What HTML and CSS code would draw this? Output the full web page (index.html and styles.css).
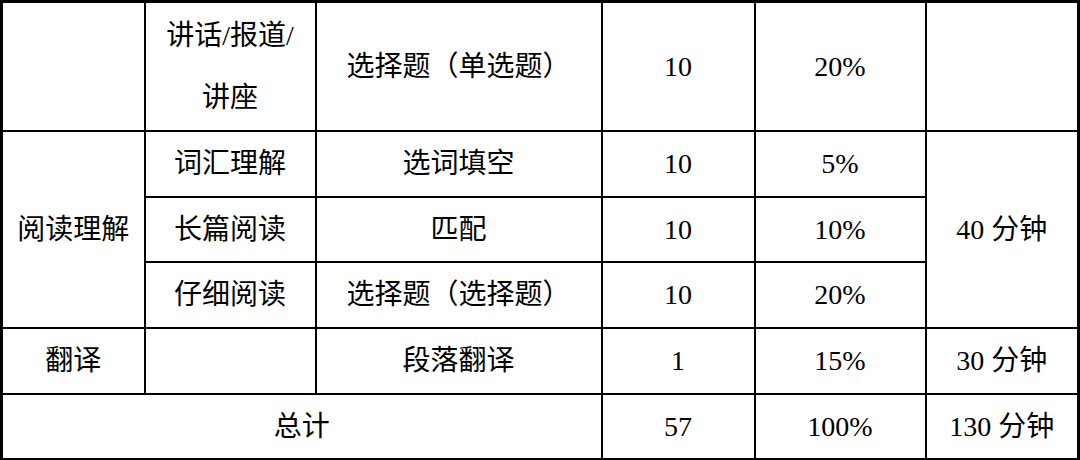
FILE: index.html
```html
<!DOCTYPE html>
<html lang="zh-CN">
<head>
<meta charset="utf-8">
<title>考试结构</title>
<link rel="stylesheet" href="styles.css">
</head>
<body>
<table class="exam">
  <colgroup>
    <col class="c1"><col class="c2"><col class="c3"><col class="c4"><col class="c5"><col class="c6">
  </colgroup>
  <tbody>
    <tr class="r-tall">
      <td></td>
      <td class="two-line">讲话/报道/<br>讲座</td>
      <td>选择题（单选题）</td>
      <td>10</td>
      <td>20%</td>
      <td></td>
    </tr>
    <tr class="r-a">
      <td rowspan="3">阅读理解</td>
      <td>词汇理解</td>
      <td>选词填空</td>
      <td>10</td>
      <td>5%</td>
      <td rowspan="3">40 分钟</td>
    </tr>
    <tr class="r-b">
      <td>长篇阅读</td>
      <td>匹配</td>
      <td>10</td>
      <td>10%</td>
    </tr>
    <tr class="r-a">
      <td>仔细阅读</td>
      <td>选择题（选择题）</td>
      <td>10</td>
      <td>20%</td>
    </tr>
    <tr class="r-a">
      <td>翻译</td>
      <td></td>
      <td>段落翻译</td>
      <td>1</td>
      <td>15%</td>
      <td>30 分钟</td>
    </tr>
    <tr class="r-b">
      <td colspan="3">总计</td>
      <td>57</td>
      <td>100%</td>
      <td>130 分钟</td>
    </tr>
  </tbody>
</table>
</body>
</html>
```
FILE: styles.css
```css
html, body {
  margin: 0;
  padding: 0;
  background: #ffffff;
}

.exam {
  width: 1080px;
  table-layout: fixed;
  border-collapse: collapse;
  border: 3px solid #000;
  font-family: "Liberation Serif", "Noto Sans CJK SC", serif;
  font-size: 28px;
  color: #000;
}

.c1 { width: 143px; }
.c2 { width: 171px; }
.c3 { width: 286px; }
.c4 { width: 153px; }
.c5 { width: 171px; }
.c6 { width: 153px; }

.exam td {
  border: 2px solid #000;
  padding: 0;
  text-align: center;
  vertical-align: middle;
  line-height: 1.2;
}

.r-tall td { height: 127px; }
.r-a td { height: 64px; }
.r-b td { height: 63px; }

.exam td.two-line {
  line-height: 62px;
}
```
